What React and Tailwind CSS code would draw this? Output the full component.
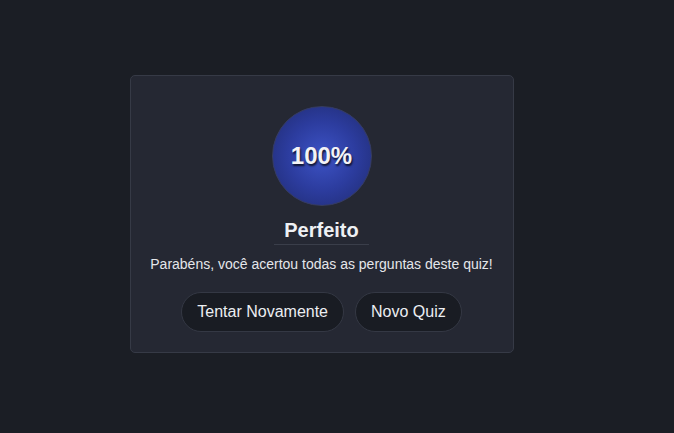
import React from 'react';

export default function App() {
    return (
        <div className="min-h-screen bg-[#1b1e25] flex justify-center pt-[75px] pr-[31px]" style={{ fontFamily: '"Liberation Sans", Arial, sans-serif' }}>
            <div className="w-[384px] h-[278px] bg-[#252833] border border-[#363a46] rounded-[5px] flex flex-col items-center pt-[30px]">
                <div className="w-[100px] h-[100px] rounded-full border border-[#363c62] bg-[radial-gradient(circle,#3d53c6_0%,#2c3c9e_50%,#1f2a6e_100%)] flex items-center justify-center">
                    <span className="text-[24px] font-bold text-[#f3f3f6] [text-shadow:1px_2px_2px_rgba(0,0,0,0.75)]">100%</span>
                </div>
                <h2 className="mt-[10px] px-[10px] text-[20px] leading-[28px] font-bold text-[#eef0f4] border-b border-[#3a3e4a]">Perfeito</h2>
                <p className="mt-[9px] text-[14px] leading-[20px] text-[#e4e6ea]">Parabéns, você acertou todas as perguntas deste quiz!</p>
                <div className="mt-[18px] flex gap-[11px]">
                    <button className="h-[40px] px-[15px] rounded-full bg-[#191c23] border border-[#343844] text-[16px] text-[#eceef2]">Tentar Novamente</button>
                    <button className="h-[40px] px-[15px] rounded-full bg-[#191c23] border border-[#343844] text-[16px] text-[#eceef2]">Novo Quiz</button>
                </div>
            </div>
        </div>
    );
}
